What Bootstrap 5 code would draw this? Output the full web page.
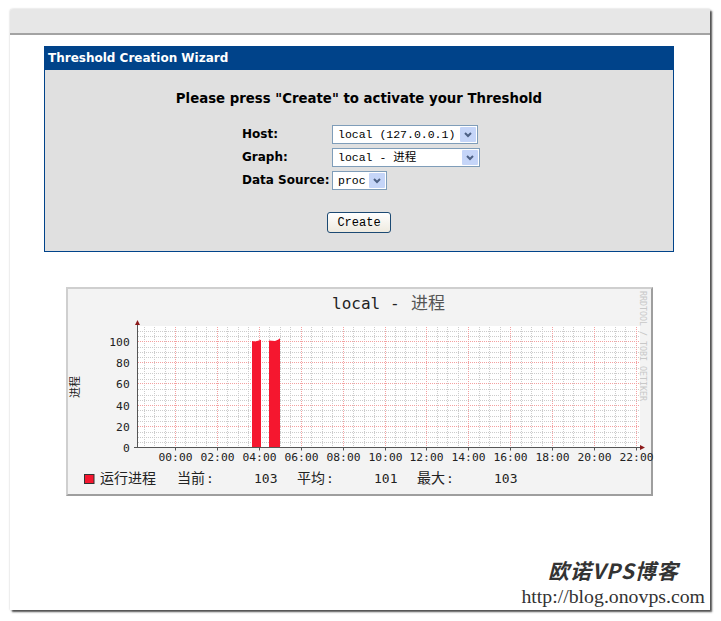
<!DOCTYPE html>
<html lang="zh">
<head>
    <meta charset="UTF-8">
    <title>Threshold Creation Wizard</title>
    <link rel="stylesheet" href="https://cdn.jsdelivr.net/npm/bootstrap@5.3.0/dist/css/bootstrap.min.css">
    <style>
        html, body { height: 621px; overflow: hidden; background: #fff; }
        .app-window {
            position: relative;
            height: 601px;
            margin: 9px 11px 0 10px;
            background: #fff;
            border-radius: 3px 0 0 0;
            box-shadow: 2px 2px 2px rgba(50,50,50,.85), 0 0 2px rgba(0,0,0,.25);
        }
        .top-strip { height: 26px; background: #e7e7e7; border-bottom: 2px solid #a3a3a3; border-radius: 3px 0 0 0; }
        .wizard-box { width: 630px; height: 206px; margin: 11px 0 0 34px; background: #e0e0e0; border: 1px solid #00438a; }
        .wizard-head { height: 23px; padding-left: 3px; background: #00438a; color: #fff; font: bold 12px/23px "DejaVu Sans", sans-serif; }
        .wizard-title { margin: 19px 0 0; text-align: center; color: #000; font: bold 13.3px/20px "DejaVu Sans", sans-serif; }
        .wizard-rows { margin: 16px 0 0 197px; }
        .wizard-row { height: 23px; }
        .wizard-row label { width: 90px; color: #000; font: bold 12px/18px "DejaVu Sans", sans-serif; }
        .wizard-row .form-select {
            height: 19px; padding: 0 20px 0 5px; border: 1px solid #7f9db9; border-radius: 0;
            font: 11.5px/17px "Liberation Mono", "Noto Sans CJK SC", monospace; color: #000;
            background-color: #fff; background-position: right 1px center; background-size: 16px 15px;
            background-image: url("data:image/svg+xml,%3Csvg xmlns='http://www.w3.org/2000/svg' viewBox='0 0 16 15'%3E%3Crect width='16' height='15' rx='1' fill='%23c5d5f8'/%3E%3Cpath d='M5 6l3 3 3-3' fill='none' stroke='%234d6185' stroke-width='2'/%3E%3C/svg%3E");
        }
        .sel-host { width: 146px; }
        .sel-graph { width: 148px; }
        .sel-source { width: 55px; }
        .wizard-btn { width: 64px; height: 21px; margin: 18px 0 0 282px; padding: 0; display: block; border: 1px solid #1c4a73; border-radius: 3px; background: linear-gradient(#fff, #eeeadf); color: #000; font: 12px/18px "Liberation Mono", monospace; }
        .rrd-box { width: 587px; height: 209px; margin: 35px 0 0 56px; background: #f3f3f3; border: 2px solid; border-color: #cfcfcf #9e9e9e #9e9e9e #cfcfcf; }
        .rrd-box svg { display: block; overflow: visible; }
        .rrd-mono { font-family: "DejaVu Sans Mono", monospace; fill: #222; }
        .rrd-cjk { font-family: "Noto Sans CJK SC", sans-serif; fill: #222; }
        .site-mark { position: absolute; right: 5px; bottom: 2px; width: 190px; color: #333; }
        .site-mark-name { font: italic bold 21px/30px "Noto Sans CJK SC", sans-serif; letter-spacing: 1px; padding-left: 33px; }
        .site-mark-url { font: 19.8px/23px "Liberation Serif", serif; white-space: nowrap; text-align: right; }
    </style>
</head>
<body>

<div class="app-window">
    <div class="top-strip"></div>

    <div class="wizard-box">
        <div class="wizard-head">Threshold Creation Wizard</div>
        <p class="wizard-title">Please press "Create" to activate your Threshold</p>
        <form class="wizard-rows">
            <div class="wizard-row d-flex"><label>Host:</label><select class="form-select sel-host"><option>local (127.0.0.1)</option></select></div>
            <div class="wizard-row d-flex"><label>Graph:</label><select class="form-select sel-graph"><option>local - 进程</option></select></div>
            <div class="wizard-row d-flex"><label>Data Source:</label><select class="form-select sel-source"><option>proc</option></select></div>
        </form>
        <button type="button" class="btn wizard-btn">Create</button>
    </div>

    <div class="rrd-box">
        <svg id="rrd" width="583" height="205" viewBox="68 289 583 205"></svg>
    </div>

    <div class="site-mark">
        <div class="site-mark-name">欧诺VPS博客</div>
        <div class="site-mark-url">http://blog.onovps.com</div>
    </div>
</div>

<script>
  // chart is drawn in page coordinates, same numbers as the screenshot
  const left = 138, right = 640, base = 447.5, top_ = 326;
  const snap = (v) => Math.round(v) + 0.5;
  let s = `<rect x="${left}" y="${top_}" width="${right - left}" height="${base - top_}" fill="#fff"/>`;

  // minor grid, 30 min and 5 units
  for (let k = -3; k < 45; k++) {
    const x = snap(175 + k * 10.475);
    if (k % 4 !== 0 && x < right) s += `<line x1="${x}" x2="${x}" y1="${top_ + 1}" y2="${base}" stroke="#ccc" stroke-dasharray="1 1"/>`;
  }
  for (let k = 1; k < 23; k++) {
    const y = snap(base - k * 5.3);
    if (k % 4 !== 0) s += `<line x1="${left}" x2="${right}" y1="${y}" y2="${y}" stroke="#ccc" stroke-dasharray="1 1"/>`;
  }

  // major grid and hour labels
  const hours = ["00:00","02:00","04:00","06:00","08:00","10:00","12:00","14:00","16:00","18:00","20:00","22:00"];
  hours.forEach((h, i) => {
    const x = snap(175 + i * 41.9);
    s += `<line x1="${x}" x2="${x}" y1="${top_ + 1}" y2="${base}" stroke="#f4a0a0" stroke-dasharray="1 1"/>`;
    s += `<line x1="${x}" x2="${x}" y1="${base}" y2="${base + 3}" stroke="#555"/>`;
    s += `<text class="rrd-mono" x="${x}" y="461" text-anchor="middle" font-size="11.3">${h}</text>`;
  });
  [0, 20, 40, 60, 80, 100].forEach((v) => {
    const y = snap(base - 0.5 - v * 1.06);
    if (v > 0) s += `<line x1="${left}" x2="${right}" y1="${y}" y2="${y}" stroke="#f4a0a0" stroke-dasharray="1 1"/>`;
    s += `<text class="rrd-mono" x="129.7" y="${y + 4}" text-anchor="end" font-size="11.3">${v}</text>`;
  });

  // data
  s += `<path d="M252 447.5V341l3 .5 3-.7 3-1V447.5zM269 447.5V340.5l3 .3 3 .2 3-1.3 2-1.5V447.5z" fill="#f5172f"/>`;

  // axes
  s += `<path d="M137.5 447.5V325M134 447.5H640" stroke="#555" fill="none"/>`;
  s += `<path d="M135 325l2.5-5 2.5 5zM640 445l5 2.5-5 2.5z" fill="#8c1a1a"/>`;

  // labels
  s += `<text class="rrd-mono" x="332" y="309" font-size="16">local</text>`;
  s += `<text class="rrd-mono" x="390" y="309" font-size="16">-</text>`;
  s += `<text class="rrd-cjk" x="411" y="309" font-size="17" style="fill:#555">进程</text>`;
  s += `<text class="rrd-cjk" font-size="11" transform="translate(79 398) rotate(-90)">进程</text>`;
  s += `<text class="rrd-mono" font-size="8.3" transform="translate(640 291) rotate(90)" style="fill:#c8c8c8">RRDTOOL / TOBI OETIKER</text>`;

  // legend
  s += `<rect x="84.5" y="474.5" width="9.5" height="9" fill="#f5172f" stroke="#333"/>`;
  s += `<text class="rrd-cjk" x="100" y="483" font-size="14">运行进程</text>`;
  [[177, "当前", 254, "103"], [297, "平均", 374, "101"], [417, "最大", 494, "103"]].forEach((l) => {
    s += `<text class="rrd-cjk" x="${l[0]}" y="483" font-size="14">${l[1]}</text>`;
    s += `<text class="rrd-mono" x="${l[0] + 29}" y="483" font-size="13">:</text>`;
    s += `<text class="rrd-mono" x="${l[2]}" y="483" font-size="13">${l[3]}</text>`;
  });

  document.getElementById("rrd").innerHTML = s;
</script>
<script src="https://cdn.jsdelivr.net/npm/bootstrap@5.3.0/dist/js/bootstrap.bundle.min.js"></script>
</body>
</html>
